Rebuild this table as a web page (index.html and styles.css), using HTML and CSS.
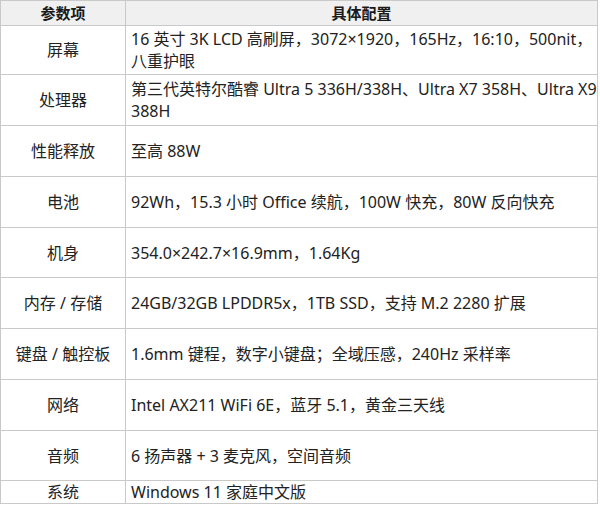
FILE: index.html
```html
<!DOCTYPE html>
<html lang="zh-CN">
<head>
<meta charset="utf-8">
<link rel="stylesheet" href="styles.css">
</head>
<body>
<table class="spec">
  <colgroup><col class="c1"><col class="c2"></colgroup>
  <thead>
    <tr class="h-head"><th>参数项</th><th>具体配置</th></tr>
  </thead>
  <tbody>
    <tr class="h49"><td class="k">屏幕</td><td class="v">16 英寸 3K LCD 高刷屏，3072×1920，165Hz，16:10，500nit，<br>八重护眼</td></tr>
    <tr class="h51"><td class="k">处理器</td><td class="v">第三代英特尔酷睿 Ultra 5 336H/338H、Ultra X7 358H、Ultra X9<br>388H</td></tr>
    <tr class="h51"><td class="k">性能释放</td><td class="v">至高 88W</td></tr>
    <tr class="h51"><td class="k">电池</td><td class="v">92Wh，15.3 小时 Office 续航，100W 快充，80W 反向快充</td></tr>
    <tr class="h50"><td class="k">机身</td><td class="v">354.0×242.7×16.9mm，1.64Kg</td></tr>
    <tr class="h51"><td class="k">内存 / 存储</td><td class="v">24GB/32GB LPDDR5x，1TB SSD，支持 M.2 2280 扩展</td></tr>
    <tr class="h51"><td class="k">键盘 / 触控板</td><td class="v">1.6mm 键程，数字小键盘；全域压感，240Hz 采样率</td></tr>
    <tr class="h51"><td class="k">网络</td><td class="v">Intel AX211 WiFi 6E，蓝牙 5.1，黄金三天线</td></tr>
    <tr class="h50"><td class="k">音频</td><td class="v">6 扬声器 + 3 麦克风，空间音频</td></tr>
    <tr class="h23"><td class="k">系统</td><td class="v">Windows 11 家庭中文版</td></tr>
  </tbody>
</table>
</body>
</html>
```

FILE: styles.css
```css
html, body {
  margin: 0;
  padding: 0;
  background: #ffffff;
}

body {
  font-family: "Noto Sans", "Noto Sans CJK SC", sans-serif;
  color: #222222;
}

.spec {
  border-collapse: collapse;
  table-layout: fixed;
  width: 597px;
  font-size: 16px;
  line-height: 22px;
}

.c1 { width: 125px; }
.c2 { width: 472px; }

.spec th,
.spec td {
  border: 1px solid #c9c9c9;
  padding: 0 0 0 5px;
  vertical-align: middle;
}

.spec th {
  background: #f0f0f0;
  font-weight: bold;
  font-size: 15px;
  text-align: center;
  padding: 0;
  color: #1a1a1a;
}

.spec td.k {
  text-align: center;
  padding: 0;
}

.spec td.v {
  text-align: left;
  white-space: nowrap;
}

.h-head { height: 25px; }
.h49 { height: 49px; }
.h50 { height: 50px; }
.h51 { height: 51px; }
.h23 { height: 23px; }
```
